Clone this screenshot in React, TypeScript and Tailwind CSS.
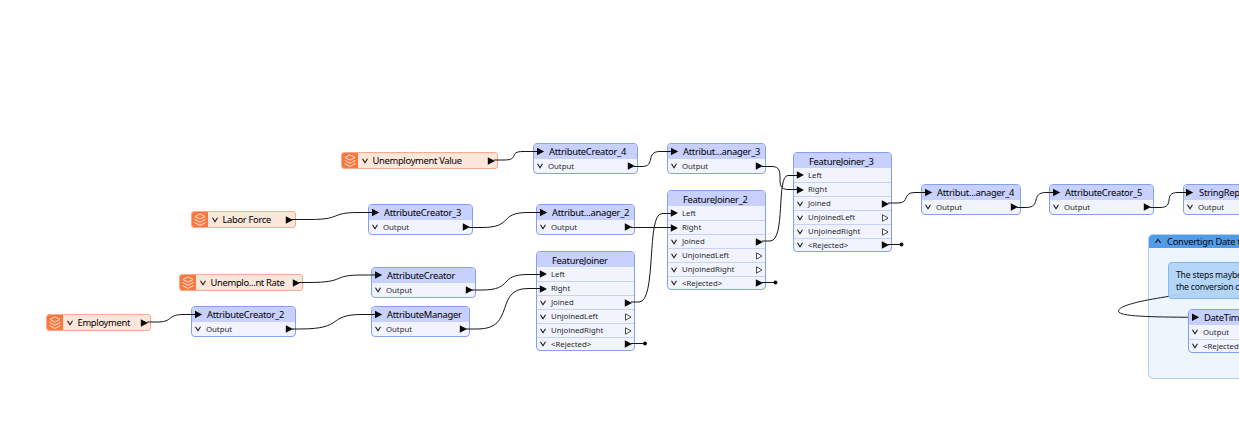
import React from "react";

type Port = { name: string; kind: "in" | "out" | "open" };

type TransformerProps = { x: number; y: number; w: number; title: string; ports?: Port[] };

const OUTPUT: Port[] = [{ name: "Output", kind: "out" }];

const JOINER: Port[] = [
  { name: "Left", kind: "in" },
  { name: "Right", kind: "in" },
  { name: "Joined", kind: "out" },
  { name: "UnjoinedLeft", kind: "open" },
  { name: "UnjoinedRight", kind: "open" },
  { name: "<Rejected>", kind: "out" },
];

function Arrow({ open = false }: { open?: boolean }) {
  return (
    <svg className="block h-[8px] w-[8px] shrink-0" viewBox="0 0 8 8">
      {open ? (
        <path d="M1.5 0.8 L7 4 L1.5 7.2 Z" fill="#fbfcff" stroke="#222" strokeWidth="0.8" />
      ) : (
        <path d="M0.8 0.3 L8 4 L0.8 7.7 Z" fill="#080808" />
      )}
    </svg>
  );
}

function Chevron({ up = false }: { up?: boolean }) {
  return (
    <svg className="block h-[8px] w-[8px] shrink-0" viewBox="0 0 8 8">
      <path
        d={up ? "M1.4 5.8 L4 2.4 L6.6 5.8" : "M1.5 1.8 L4 5.8 L6.5 1.8"}
        fill="none"
        stroke="#1a1a1a"
        strokeWidth="1.1"
      />
    </svg>
  );
}

function Layers() {
  return (
    <svg className="block h-[14px] w-[14px]" viewBox="0 0 14 14" fill="none" stroke="#ffe6d8" strokeWidth="1">
      <path d="M7 0.9 L12 3.5 L7 6.1 L2 3.5 Z" />
      <path d="M1.5 6.3 L7 9.3 L12.5 6.3" />
      <path d="M1.5 9.5 L7 12.5 L12.5 9.5" />
    </svg>
  );
}

function Transformer({ x, y, w, title, ports = OUTPUT }: TransformerProps) {
  return (
    <div
      className="absolute overflow-hidden rounded-[4px] border border-[#86a0f0] bg-[#f1f4fd]"
      style={{ left: x, top: y, width: w }}
    >
      <h2
        className={`h-[15px] whitespace-nowrap bg-[#c8d0fd] pl-[15px] text-[9.4px] font-normal tracking-[-0.27px] text-black ${
          ports.length > 2 ? "leading-[17px]" : "leading-[15px]"
        }`}
      >
        {title}
      </h2>
      {ports.map((p, i) => (
        <div
          key={p.name}
          className={`flex items-center pl-[2px] pr-[2px] ${
            ports.length > 1 && i === ports.length - 1 ? "h-[13px]" : "h-[14px]"
          } ${i > 0 ? "border-t border-[#c6d2f7]" : ""}`}
        >
          {p.kind === "in" ? <Arrow /> : <Chevron />}
          <span className="ml-[4px] flex-1 whitespace-nowrap text-[7.8px] leading-[13px] tracking-[-0.02px] text-[#2a2a32]">
            {p.name}
          </span>
          {p.kind !== "in" && <Arrow open={p.kind === "open"} />}
        </div>
      ))}
    </div>
  );
}

function Reader({ x, y, w, title }: { x: number; y: number; w: number; title: string }) {
  return (
    <div
      className="absolute flex h-[17px] items-center overflow-hidden rounded-[3px] border border-[#f8ab8c] bg-[#fce6da] pr-[2px]"
      style={{ left: x, top: y, width: w }}
    >
      <span className="-my-px -ml-px flex h-[17px] w-[17px] shrink-0 items-center justify-center bg-[#f9783f]">
        <Layers />
      </span>
      <span className="ml-[3px]">
        <Chevron />
      </span>
      <span className="ml-[3.5px] flex-1 whitespace-nowrap text-[9.4px] leading-[15px] tracking-[-0.32px] text-black">
        {title}
      </span>
      <Arrow />
    </div>
  );
}

const READERS = [
  { x: 341, y: 152, w: 157, title: "Unemployment Value" },
  { x: 191, y: 211, w: 105, title: "Labor Force" },
  { x: 179, y: 274, w: 124, title: "Unemplo...nt Rate" },
  { x: 46, y: 314, w: 105, title: "Employment" },
];

const TRANSFORMERS: TransformerProps[] = [
  { x: 533, y: 143, w: 105, title: "AttributeCreator_4" },
  { x: 667, y: 143, w: 99, title: "Attribut...anager_3" },
  { x: 793, y: 152, w: 99, title: "FeatureJoiner_3", ports: JOINER },
  { x: 667, y: 190, w: 99, title: "FeatureJoiner_2", ports: JOINER },
  { x: 368, y: 204, w: 105, title: "AttributeCreator_3" },
  { x: 536, y: 204, w: 99, title: "Attribut...anager_2" },
  { x: 371, y: 267, w: 105, title: "AttributeCreator" },
  { x: 371, y: 306, w: 99, title: "AttributeManager" },
  { x: 191, y: 306, w: 105, title: "AttributeCreator_2" },
  { x: 536, y: 251, w: 99, title: "FeatureJoiner", ports: JOINER },
  { x: 921, y: 184, w: 100, title: "Attribut...anager_4" },
  { x: 1049, y: 184, w: 105, title: "AttributeCreator_5" },
  { x: 1183, y: 184, w: 105, title: "StringReplacer" },
  {
    x: 1188,
    y: 309,
    w: 110,
    title: "DateTimeConverter",
    ports: [
      { name: "Output", kind: "out" },
      { name: "<Rejected>", kind: "out" },
    ],
  },
];

const WIRES = [
  "M494 160 H504 C520 160 508 151.5 523 151.5 H538",
  "M634 166.5 H642 C656 166.5 645 151.5 660 151.5 H671",
  "M762 166.5 H772 C788 166.5 772 189.5 788 189.5 H797",
  "M762 241 H770 C786 241 776 175.5 788 175.5 H797",
  "M888 203 H898 C910 203 902 192.5 915 192.5 H925",
  "M1017 207.5 H1026 C1042 207.5 1030 192.5 1046 192.5 H1053",
  "M1150 207.5 H1160 C1176 207.5 1162 192.5 1178 192.5 H1187",
  "M291 219.5 H310 C342 219.5 330 212.5 358 212.5 H372",
  "M469 227.5 H482 C514 227.5 498 212.5 528 212.5 H540",
  "M631 227.5 H671",
  "M299 282.5 H308 C348 282.5 330 275 362 275 H375",
  "M471 290 H482 C514 290 498 274.5 528 274.5 H540",
  "M466 329 H478 C516 329 494 288.5 528 288.5 H540",
  "M292 329 H300 C346 329 326 314.5 362 314.5 H375",
  "M147 322 H157 C174 322 166 314.5 184 314.5 H195",
  "M631 302 H639 C657 302 646 213.5 662 213.5 H671",
  "M631 343.5 H645",
  "M762 282.5 H776",
  "M888 244.5 H902",
];

/* Input ports that sit in a title bar rather than in a port row. */
const TITLE_INPUTS = [
  [537, 151.5],
  [671, 151.5],
  [372, 212.5],
  [540, 212.5],
  [375, 275],
  [375, 314.5],
  [195, 314.5],
  [925, 192.5],
  [1053, 192.5],
  [1186, 192.5],
  [1192, 317.3],
];

export default function App() {
  return (
    <main className="relative h-[422px] w-full overflow-hidden bg-white font-['Noto_Sans','Open_Sans',sans-serif]">
      <section className="absolute left-[1148px] top-[234px] h-[145px] w-[200px] overflow-hidden rounded-[5px] border border-[#b3cfea] bg-[#edf5fd]">
        <header className="-mx-px -mt-px flex h-[14px] items-center whitespace-nowrap bg-[#529be9] pl-[6px] text-[9.3px] leading-[15px] tracking-[-0.2px] text-[#06090f]">
          <Chevron up />
          <span className="ml-[5px] pt-px">Convertign Date to</span>
        </header>
      </section>

      <svg className="absolute left-0 top-0 h-[422px] w-[1239px]" viewBox="0 0 1239 422">
        <path
          d="M1236 288 C1180 294 1119 302 1118.5 311 C1118 316.5 1150 317 1193 317.3"
          fill="none"
          stroke="#1c1c1c"
          strokeWidth="1"
        />
      </svg>

      <aside className="absolute left-[1168px] top-[262px] h-[37px] w-[160px] rounded-[4px] border border-[#82b9f0] bg-[#b0d3f7]/95 pl-[7px] pt-[6px] text-[8.7px] leading-[12px] tracking-[-0.22px] text-[#080c12]">
        <p className="whitespace-nowrap">The steps maybe</p>
        <p className="whitespace-nowrap">the conversion can</p>
      </aside>

      {READERS.map((r) => (
        <Reader key={r.title} {...r} />
      ))}
      {TRANSFORMERS.map((t) => (
        <Transformer key={t.title} {...t} />
      ))}

      <svg
        className="pointer-events-none absolute left-0 top-0 h-[422px] w-[1239px]"
        viewBox="0 0 1239 422"
        fill="none"
        stroke="#161616"
        strokeWidth="1"
      >
        {WIRES.map((d) => (
          <path key={d} d={d} />
        ))}
        <g fill="#080808" stroke="none">
          {TITLE_INPUTS.map(([x, y]) => (
            <path key={`${x}-${y}`} d={`M${x} ${y - 3.7} l7.2 3.7 l-7.2 3.7 Z`} />
          ))}
          <circle cx="645" cy="343.5" r="1.9" />
          <circle cx="775.5" cy="282.5" r="1.9" />
          <circle cx="901.5" cy="244.5" r="1.9" />
        </g>
      </svg>
    </main>
  );
}
